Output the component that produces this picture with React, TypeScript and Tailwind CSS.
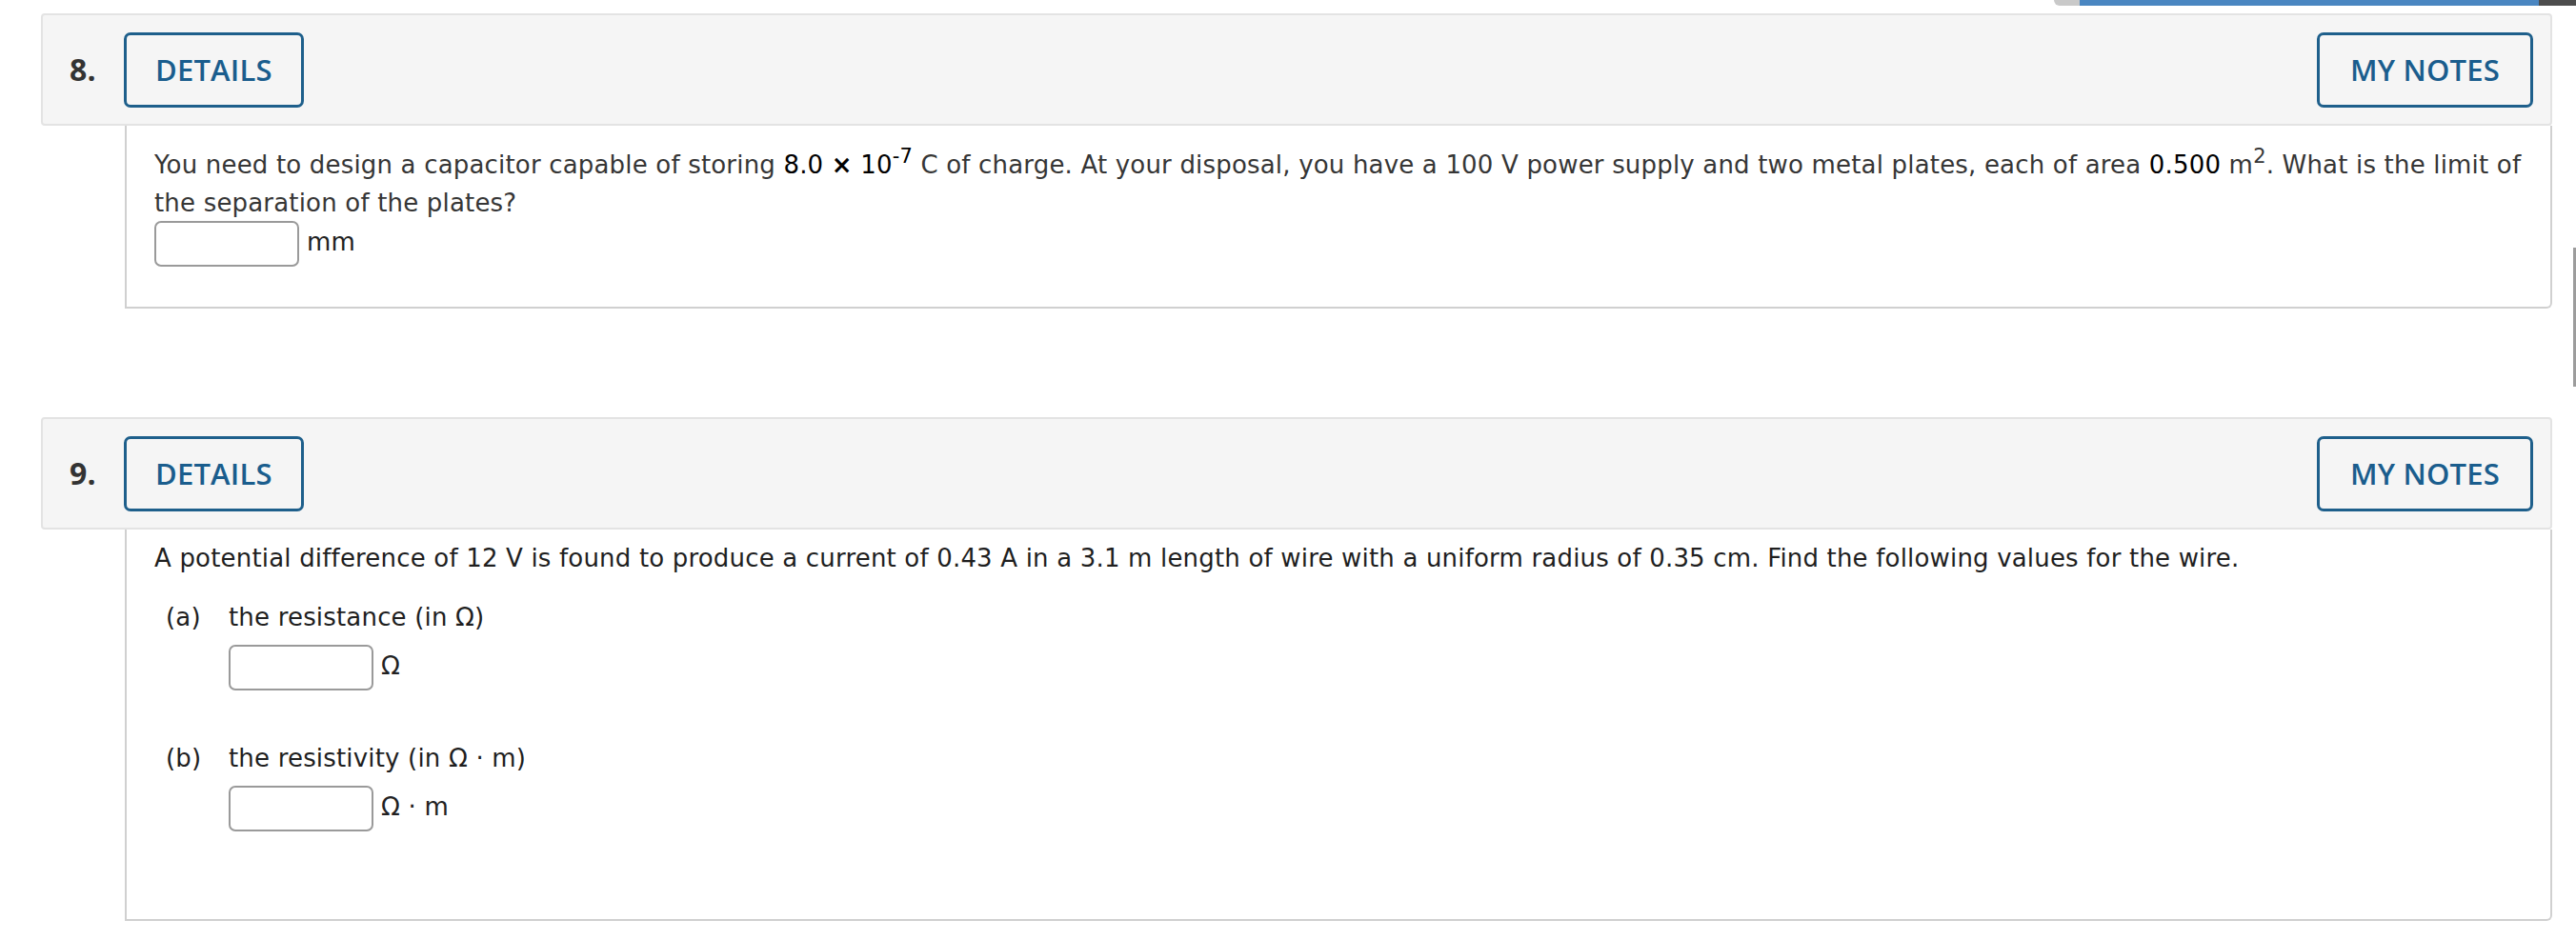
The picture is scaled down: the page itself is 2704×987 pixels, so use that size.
import React from "react";

const body = { fontFamily: '"DejaVu Sans", Verdana, sans-serif' };
const btnFont = { fontFamily: '"Open Sans", "Noto Sans", sans-serif' };

function Header({ num }: { num: string }) {
    return (
        <div className="flex h-[118px] items-center rounded-[4px] border-2 border-[#e3e3e3] bg-[#f5f5f5] pl-[28px] pr-[18px]">
            <div className="w-[57px] text-[32px] font-bold text-[#333]" style={btnFont}>
                {num}
            </div>
            <button
                className="flex h-[79px] items-center rounded-[7px] border-[3px] border-[#1e5f8b] px-[30px] text-[31px] font-semibold text-[#1a5d8d]"
                style={btnFont}
            >
                DETAILS
            </button>
            <button
                className="ml-auto flex h-[79px] items-center rounded-[7px] border-[3px] border-[#1e5f8b] px-[32px] text-[31px] font-semibold text-[#1a5d8d]"
                style={btnFont}
            >
                MY NOTES
            </button>
        </div>
    );
}

function Answer({ unit }: { unit: React.ReactNode }) {
    return (
        <div className="flex items-center">
            <input
                type="text"
                className="h-[48px] w-[152px] rounded-[7px] border-2 border-[#9a9a9a] bg-white outline-none"
            />
            <span className="ml-[8px] -mt-[4px] text-[26px] text-[#222]">{unit}</span>
        </div>
    );
}

export default function App() {
    return (
        <main
            className="relative min-h-screen bg-white pb-[20px] pl-[43px] pr-[25px] pt-[14px] tracking-[0.18px]"
            style={body}
        >
            {/* bottom edge of a fixed bar above */}
            <div className="absolute right-0 top-0 flex h-[6px] w-[548px]">
                <div className="w-[27px] rounded-bl-[6px] bg-[#c9c9c9]" />
                <div className="flex-1 bg-[#4a86c1]" />
                <div className="w-[39px] bg-[#4d4d4d]" />
            </div>
            {/* scrollbar sliver */}
            <div className="absolute right-0 top-[260px] h-[146px] w-[3px] bg-[#9c9c9c]" />

            {/* Question 8 */}
            <section>
                <Header num="8." />
                <div className="ml-[88px] rounded-br-[6px] border-2 border-t-0 border-[#d0d0d0] bg-white pb-[42px] pl-[29px] pr-[30px] pt-[21px] text-[26px] leading-[40px] text-[#363636]">
                    <p>
                        You need to design a capacitor capable of storing{" "}
                        <span className="text-black">
                            8.0 <span className="font-bold">×</span> 10
                            <sup className="-top-[11px] text-[21px]">-7</sup>
                        </span>{" "}
                        C of charge. At your disposal, you have a 100 V power supply and two metal plates, each of area{" "}
                        <span className="text-black">0.500</span> m<sup className="-top-[11px] text-[21px]">2</sup>. What is
                        the limit of the separation of the plates?
                    </p>
                    <div className="mt-[-1px]">
                        <Answer unit="mm" />
                    </div>
                </div>
            </section>

            {/* Question 9 */}
            <section className="mt-[114px]">
                <Header num="9." />
                <div className="ml-[88px] rounded-br-[6px] border-2 border-t-0 border-[#d0d0d0] bg-white pb-[92px] pl-[29px] pr-[30px] pt-[10px] text-[26px] leading-[40px] text-[#1f1f1f]">
                    <p>
                        A potential difference of 12 V is found to produce a current of 0.43 A in a 3.1 m length of wire with a
                        uniform radius of 0.35 cm. Find the following values for the wire.
                    </p>
                    <div className="mt-[22px] flex flex-col gap-[51px] pl-[12px]">
                        <div className="flex">
                            <div className="w-[66px]">(a)</div>
                            <div className="flex flex-col gap-[9px]">
                                <div>the resistance (in Ω)</div>
                                <Answer unit="Ω" />
                            </div>
                        </div>
                        <div className="flex">
                            <div className="w-[66px]">(b)</div>
                            <div className="flex flex-col gap-[9px]">
                                <div>the resistivity (in Ω · m)</div>
                                <Answer unit="Ω · m" />
                            </div>
                        </div>
                    </div>
                </div>
            </section>
        </main>
    );
}
